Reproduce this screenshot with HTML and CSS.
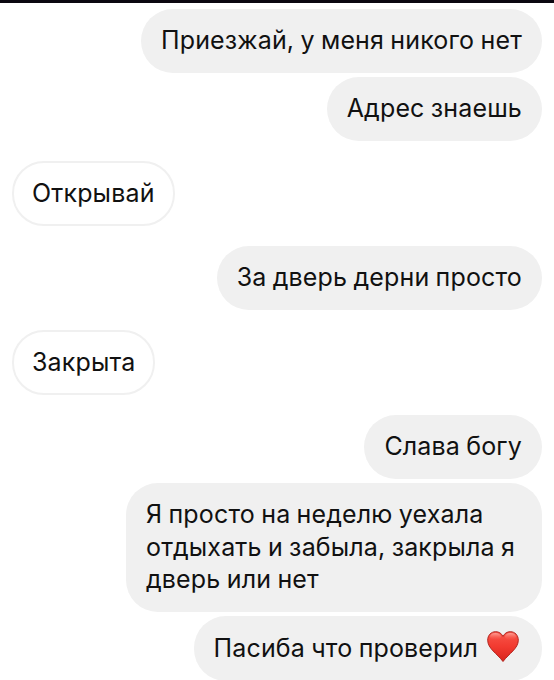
FILE: index.html
```html
<!DOCTYPE html>
<html lang="ru">
<head>
    <meta charset="UTF-8">
    <meta name="viewport" content="width=device-width, initial-scale=1.0">
    <title>Чат</title>
    <link rel="stylesheet" href="styles.css">
</head>
<body>
    <div class="chat">
        <div class="message sent">Приезжай, у меня никого нет</div>
        <div class="message sent">Адрес знаешь</div>
        <div class="message received turn">Открывай</div>
        <div class="message sent turn">За дверь дерни просто</div>
        <div class="message received turn">Закрыта</div>
        <div class="message sent turn">Слава богу</div>
        <div class="message sent long">Я просто на неделю уехала<br>отдыхать и забыла, закрыла я<br>дверь или нет</div>
        <div class="message sent with-heart">
            <span>Пасиба что проверил</span>
            <svg class="heart" viewBox="0 0 32 31">
                <defs>
                    <linearGradient id="red" x1="0" y1="0" x2="0" y2="1">
                        <stop offset="0" stop-color="#f8564a"/>
                        <stop offset="0.5" stop-color="#f23a30"/>
                        <stop offset="1" stop-color="#d8241c"/>
                    </linearGradient>
                    <linearGradient id="shine" x1="0" y1="0" x2="0" y2="1">
                        <stop offset="0" stop-color="#ffc0b8" stop-opacity="0.7"/>
                        <stop offset="1" stop-color="#ff6a5c" stop-opacity="0"/>
                    </linearGradient>
                </defs>
                <path fill="url(#red)" stroke="#b3261f" stroke-width="1" d="M16 5.500C14.500 2.200 11.800.700 8.700.700 4 .700.700 4.300.700 9.200c0 8.300 9.300 13.300 15.300 21.300 6-8 15.300-13 15.300-21.300 0-4.900-3.300-8.500-8-8.500-3.100 0-5.800 1.500-7.300 4.800z"/>
                <ellipse cx="8.500" cy="5.500" rx="5.500" ry="3.500" fill="url(#shine)"/>
                <ellipse cx="23.500" cy="5.500" rx="5.500" ry="3.500" fill="url(#shine)"/>
            </svg>
        </div>
    </div>
</body>
</html>
```
FILE: styles.css
```css
body {
    margin: 0;
    background: #fff;
    font-family: Inter, sans-serif;
    font-size: 25px;
    line-height: 32.4px;
    letter-spacing: 0.15px;
    word-spacing: -0.9px;
    color: #111;
}
.chat {
    box-sizing: border-box;
    height: 680px;
    padding: 5.5px 12px 0;
    border-top: 3px solid #0b0710;
    display: flex;
    flex-direction: column;
    align-items: flex-end;
    gap: 4px;
    overflow: hidden;
}
.message {
    box-sizing: border-box;
    flex: none;
    padding: 15.5px 20px 16.5px;
    border-radius: 32px;
    white-space: nowrap;
}
.sent {
    background: #f0f0f0;
}
.received {
    align-self: flex-start;
    border: 2px solid #f0f0f0;
    padding: 13.5px 18px 14.5px;
}
.turn {
    margin-top: 16px;
}
.long {
    width: 416px;
}
.with-heart {
    display: flex;
    align-items: center;
    padding-right: 23px;
}
.heart {
    width: 32px;
    height: 31px;
    margin: -5px 0 -3px 9px;
}
```
